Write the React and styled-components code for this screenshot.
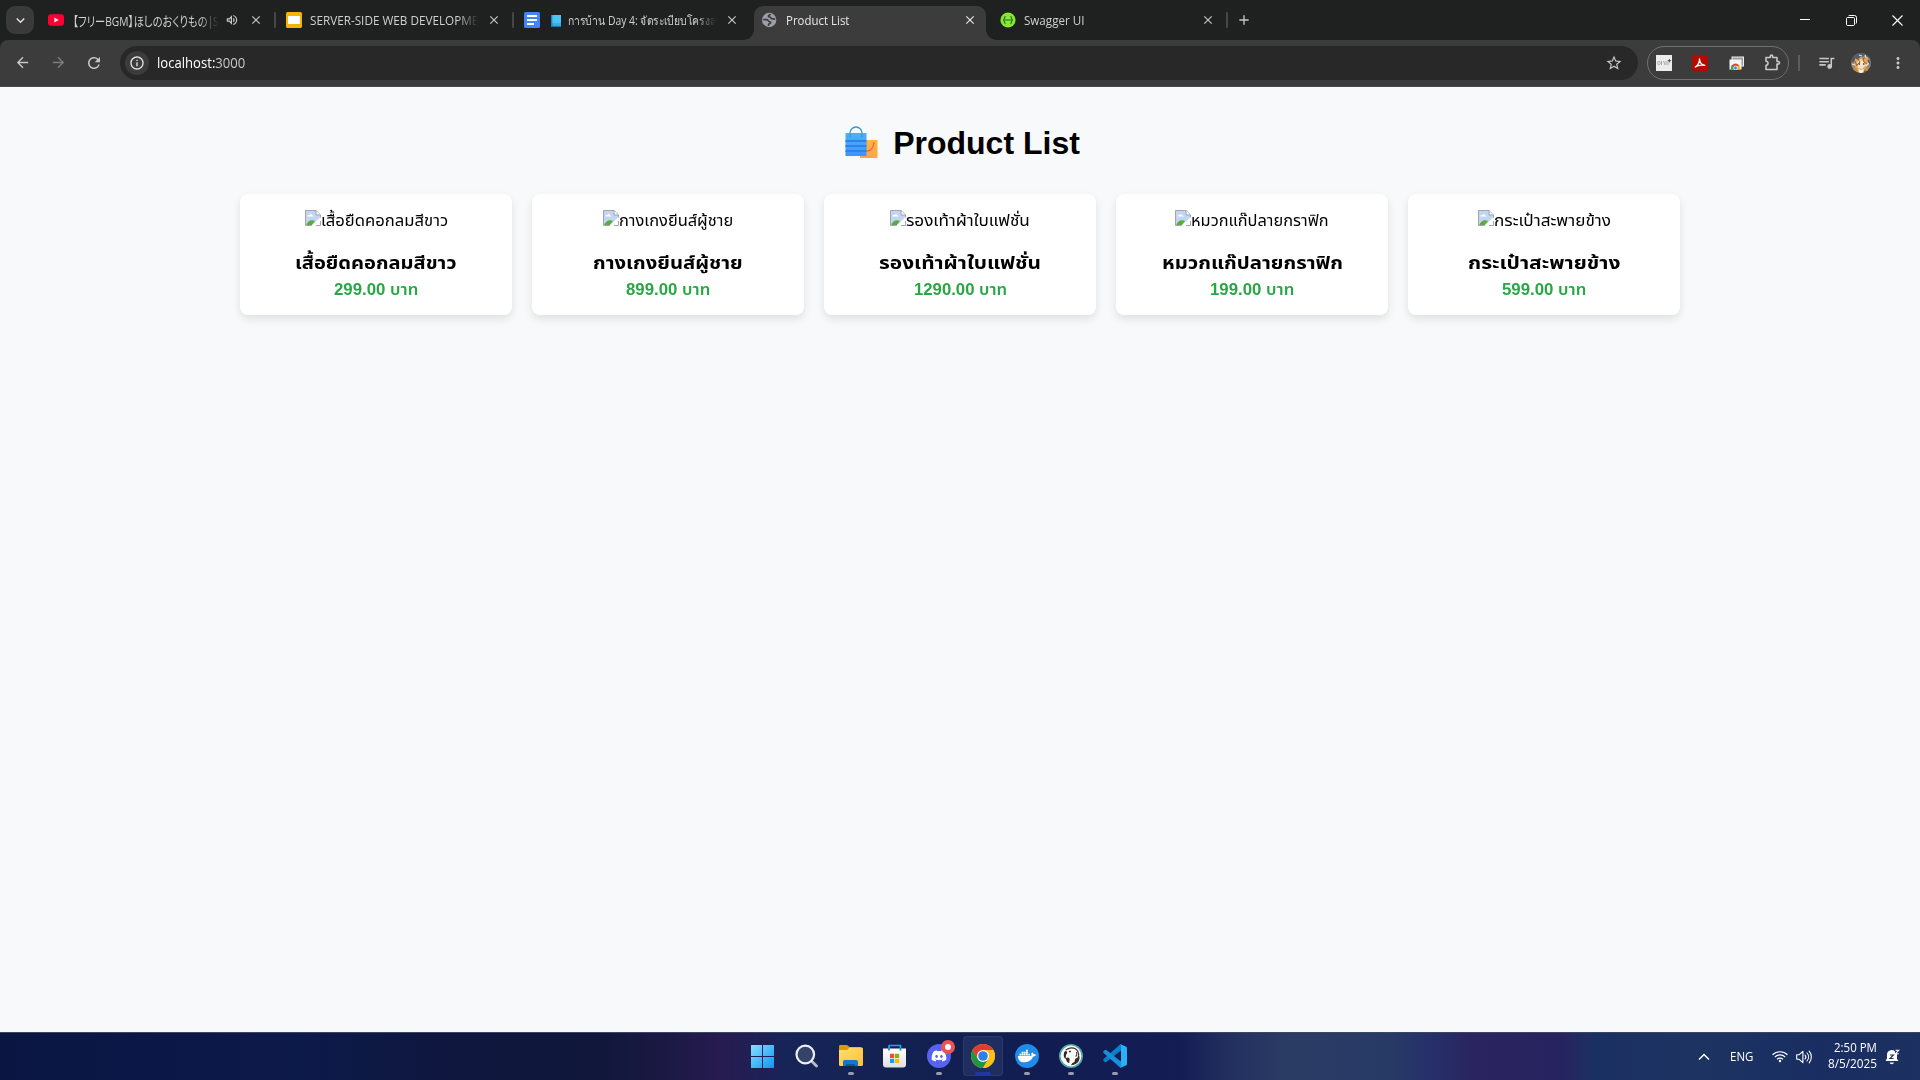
import React, { useLayoutEffect, useRef, useState } from 'react';
import styled, { createGlobalStyle } from 'styled-components';
import {
  MdArrowBack,
  MdArrowForward,
  MdRefresh,
  MdInfoOutline,
  MdStarBorder,
  MdMoreVert,
  MdClose,
  MdOutlineVolumeUp,
  MdQueueMusic,
  MdAdd,
  MdKeyboardArrowDown,
} from 'react-icons/md';
import { FaDiscord, FaDocker } from 'react-icons/fa';

const GlobalStyle = createGlobalStyle`
  * { box-sizing: border-box; }
  body { margin: 0; background: #f8f9fb; overflow: hidden; }
  h1, h3, p { margin: 0; }
  svg { display: block; flex: none; }
`;

const uiFont = '"Open Sans", "Noto Sans", "Noto Sans CJK JP", sans-serif';
const pageFont = '"Liberation Sans", "Noto Sans Thai", sans-serif';

/* ---------- text that keeps a fixed advance width ---------- */

const FitBox = styled.span`
  display: inline-block;
  width: ${(p) => p.$width}px;
  flex: none;
  text-align: left;
  white-space: pre;
`;

const FitInner = styled.span`
  display: inline-block;
  transform-origin: 0 50%;
`;

function Fit({ width, children }) {
  const ref = useRef(null);
  const [scale, setScale] = useState(1);
  useLayoutEffect(() => {
    setScale(width / ref.current.offsetWidth);
  }, [width]);
  return (
    <FitBox $width={width}>
      <FitInner ref={ref} style={{ transform: `scaleX(${scale})` }}>{children}</FitInner>
    </FitBox>
  );
}

/* ---------- browser window ---------- */

const Screen = styled.div`
  width: 1920px;
  height: 1080px;
  display: flex;
  flex-direction: column;
  overflow: hidden;
`;

const TabStrip = styled.div`
  height: 40px;
  flex: none;
  display: flex;
  background: #1f2120;
  font: 12px/16px ${uiFont};
  color: #c7c7c7;
`;

const TabSearch = styled.div`
  width: 28px;
  height: 28px;
  margin: 6px 3px 0 6px;
  border-radius: 9px;
  background: #3a3a3a;
  color: #e3e3e3;
  display: grid;
  place-items: center;
`;

const Tab = styled.div`
  position: relative;
  width: 238px;
  height: 40px;
  padding: 0 12px 0 11px;
  display: flex;
  align-items: center;
  color: ${(p) => (p.$active ? '#e8e8e8' : '#d0d0d0')};
  > * { z-index: 1; }
`;

const ActiveShape = styled.div`
  position: absolute;
  inset: 6px 3px 0 3px;
  z-index: 0;
  border-radius: 9px 9px 0 0;
  background: #3c3c3c;
  &::before, &::after {
    content: '';
    position: absolute;
    bottom: 0;
    width: 10px;
    height: 10px;
  }
  &::before { left: -10px; background: radial-gradient(circle at 0 0, transparent 9.5px, #3c3c3c 10px); }
  &::after { right: -10px; background: radial-gradient(circle at 100% 0, transparent 9.5px, #3c3c3c 10px); }
`;

const Favicon = styled.div`
  width: 16px;
  height: 16px;
  margin-right: ${(p) => p.$gap || 8}px;
  flex: none;
`;

const TabTitle = styled.div`
  flex: 1;
  min-width: 0;
  height: 20px;
  display: flex;
  align-items: center;
  overflow: hidden;
  white-space: pre;
  padding-top: 1px;
  font-size: ${(p) => p.$size || 12}px;
  font-feature-settings: ${(p) => (p.$tight ? '"palt"' : 'normal')};
  -webkit-mask-image: ${(p) => (p.$fade ? 'linear-gradient(to right, #000 calc(100% - 20px), transparent)' : 'none')};
  mask-image: ${(p) => (p.$fade ? 'linear-gradient(to right, #000 calc(100% - 20px), transparent)' : 'none')};
`;

const TabAction = styled.div`
  margin-left: ${(p) => p.$gap}px;
  color: ${(p) => (p.$active ? '#e8e8e8' : '#c7c7c7')};
`;

const TabDivider = styled.div`
  width: 2px;
  height: 16px;
  position: absolute;
  right: -1px;
  top: 12px;
  border-radius: 1px;
  background: #454746;
`;

const NewTab = styled.div`
  width: 34px;
  display: grid;
  place-items: center;
  color: #c7c7c7;
`;

const WindowButtons = styled.div`
  margin-left: auto;
  display: flex;
`;

const WindowButton = styled.div`
  width: 46px;
  height: 40px;
  display: grid;
  place-items: center;
`;

const ToolbarBack = styled.div`
  background: #1f2120;
  flex: none;
`;

const Toolbar = styled.div`
  height: 47px;
  padding: 0 10px 1px 9px;
  display: flex;
  align-items: center;
  background: #3c3c3c;
  border-bottom: 1px solid #4a4a4a;
  border-radius: 8px 8px 0 0;
`;

const NavButton = styled.div`
  width: 26px;
  margin-right: 10px;
  display: grid;
  place-items: center;
  color: ${(p) => (p.$dim ? '#7d7d7d' : '#c7c7c7')};
`;

const Omnibox = styled.div`
  width: 1518px;
  height: 34px;
  margin-left: 3px;
  padding: 0 15px 0 5px;
  border-radius: 17px;
  background: #282828;
  display: flex;
  align-items: center;
  font: 14px/20px ${uiFont};
  color: #c7c7c7;
`;

const SiteInfo = styled.div`
  width: 24px;
  height: 24px;
  margin-right: 8px;
  border-radius: 50%;
  background: #3c3c3c;
  color: #e3e3e3;
  display: grid;
  place-items: center;
`;

const Host = styled.span`
  color: #ffffff;
`;

const StarSlot = styled.div`
  margin-left: auto;
`;

const Extensions = styled.div`
  width: 142px;
  height: 34px;
  margin-left: 9px;
  border: 1px solid #707070;
  border-radius: 17px;
  display: flex;
  align-items: center;
  justify-content: space-between;
  padding: 0 7px 0 8px;
  color: #c7c7c7;
`;

const BarDivider = styled.div`
  width: 2px;
  height: 16px;
  margin: 0 17px 0 9px;
  background: #5c5c5c;
`;

const ToolSlot = styled.div`
  color: #c7c7c7;
  margin-right: ${(p) => p.$gap}px;
`;

/* ---------- product page ---------- */

const Page = styled.main`
  flex: 1;
  background: #f8f9fb;
  font-family: ${pageFont};
  color: #000;
  padding-top: 38px;
`;

const Heading = styled.h1`
  display: flex;
  justify-content: center;
  gap: 10px;
  font-size: 32px;
  line-height: 36px;
  font-weight: 700;
`;

const Grid = styled.div`
  width: 1440px;
  margin: 33px auto 0;
  display: grid;
  grid-template-columns: repeat(5, 1fr);
  gap: 20px;
`;

const Card = styled.article`
  height: 121px;
  padding: 16px;
  display: flex;
  flex-direction: column;
  align-items: center;
  background: #fff;
  border-radius: 8px;
  box-shadow: 0 4px 8px rgba(0, 0, 0, 0.1);
`;

const MissingImage = styled.div`
  height: 20px;
  display: flex;
  font-size: 16px;
  line-height: 22px;
`;

const ProductName = styled.h3`
  height: 22px;
  margin: 22px 0 6px;
  font-size: 18px;
  line-height: 22px;
  font-weight: 700;
`;

const Price = styled.p`
  height: 20px;
  font-size: 16px;
  line-height: 20px;
  font-weight: 700;
  color: #28a745;
`;

const Currency = styled.span`
  font-weight: 600;
`;

/* ---------- taskbar ---------- */

const Taskbar = styled.footer`
  height: 48px;
  flex: none;
  display: grid;
  grid-template-columns: 741px 396px 1fr;
  border-top: 1px solid #3d4663;
  background: linear-gradient(to right,
    #0a1542 0, #0c1a4a 300px, #0e1740 420px, #10173a 600px, #1c1945 670px, #271b50 720px,
    #172458 790px, #122150 900px, #111d52 1060px, #141d54 1180px, #22305f 1230px, #2b3c64 1290px,
    #273a66 1390px, #26306a 1430px, #2a2560 1470px, #272360 1560px, #1b3062 1595px, #1d3462 1700px,
    #192d62 1820px, #1c3160 1920px);
`;

const Apps = styled.div`
  grid-column: 2;
  display: flex;
`;

const AppSlot = styled.div`
  position: relative;
  width: 40px;
  height: 40px;
  margin: 3px 2px 0;
  border-radius: 4px;
  display: grid;
  place-items: center;
  background: ${(p) => (p.$focused ? 'rgba(150, 160, 210, 0.11)' : 'transparent')};
  box-shadow: ${(p) => (p.$focused ? 'inset 0 0 0 1px rgba(160, 175, 230, 0.1)' : 'none')};
`;

const Running = styled.div`
  position: absolute;
  bottom: 1px;
  left: 50%;
  width: ${(p) => (p.$focused ? 16 : 6)}px;
  height: 3px;
  margin-left: ${(p) => (p.$focused ? -8 : -3)}px;
  border-radius: 2px;
  background: ${(p) => (p.$focused ? '#2037a3' : '#989cac')};
`;

const Badge = styled.div`
  position: absolute;
  top: 4px;
  right: 4px;
  width: 14px;
  height: 14px;
  border-radius: 50%;
  border: 4px solid #ee5253;
  background: #fff;
`;

const Tray = styled.div`
  grid-column: 3;
  display: flex;
  align-items: center;
  justify-content: flex-end;
  padding-right: 20px;
  color: #fff;
  font: 12px/16px ${uiFont};
`;

const TraySlot = styled.div`
  margin-right: ${(p) => p.$gap}px;
`;

const Clock = styled.div`
  display: flex;
  flex-direction: column;
  align-items: flex-end;
  margin: -2px 8px 0 0;
`;

/* ---------- icons ---------- */

const YouTubeIcon = () => (
  <svg width="16" height="16" viewBox="0 0 16 16">
    <rect x="0" y="2.3" width="16" height="11.4" rx="3" fill="#ff0033" />
    <path d="M6.4 5.6 10.6 8 6.4 10.4z" fill="#fff" />
  </svg>
);

const SlidesIcon = () => (
  <svg width="16" height="16" viewBox="0 0 16 16">
    <rect width="16" height="16" rx="1.6" fill="#f5b400" />
    <rect x="2" y="4" width="12" height="8" fill="#fff" />
  </svg>
);

const DocsIcon = () => (
  <svg width="16" height="16" viewBox="0 0 16 16">
    <rect width="16" height="16" rx="1.6" fill="#4285f4" />
    <path d="M3 4h10M3 8h10M3 12h7" stroke="#fff" strokeWidth="2" />
  </svg>
);

const BookIcon = () => (
  <svg width="17" height="14" viewBox="0 0 17 14">
    <path d="M0 1h10v11.5H0z" fill="#35b1ea" />
    <path d="M0 1h1.5v11.5H0z" fill="#1d86c8" />
    <path d="M1.500 1H10v8H1.500z" fill="#4dc2f4" />
    <path d="M1 12.5h9" stroke="#1a73b8" strokeWidth="1.2" />
  </svg>
);

const GlobeIcon = () => (
  <svg width="16" height="16" viewBox="0 0 16 16">
    <circle cx="7.200" cy="8" r="7.200" fill="#9aa0a6" />
    <path d="M1.200 7.600h3.600c1.600 0 1.200 1.900 2.800 2.100 1.600.2 1.200 1.500 0 1.900-1.200.5-1.200 1.300-1.200 2.300" fill="none" stroke="#3c3c3c" strokeWidth="1.600" />
    <path d="M8.600 2c-.2 1-1.900.8-2.200 1.700-.3 1 .9 1.200 1.700 1.300 1 .2.600 1.600 1.700 1.800 1.200.2 2.300 0 3.400.4" fill="none" stroke="#3c3c3c" strokeWidth="1.600" />
  </svg>
);

const SwaggerIcon = () => (
  <svg width="16" height="16" viewBox="0 0 16 16">
    <circle cx="8" cy="8" r="7.6" fill="#85ea2d" />
    <path d="M5.6 4.2c-1.5 0-.6 2.9-2 3.8 1.4.9.5 3.8 2 3.8M10.4 4.2c1.5 0 .6 2.9 2 3.8-1.4.9-.5 3.8-2 3.8" fill="none" stroke="#2d5a3a" strokeWidth="1.1" />
    <path d="M5 8h6" stroke="#3f7a35" strokeWidth="1.300" />
  </svg>
);

const MinimizeIcon = () => (
  <svg width="10" height="10" viewBox="0 0 10 10"><path d="M0 4.5h10" stroke="#fff" /></svg>
);

const RestoreIcon = () => (
  <svg width="11" height="11" viewBox="0 0 11 11" fill="none" stroke="#fff">
    <rect x=".5" y="2.5" width="8" height="8" rx="1.2" />
    <path d="M2.5.8Q3 .5 4 .5h4.5q2 0 2 2V7q0 1-.4 1.5" />
  </svg>
);

const CloseIcon = () => (
  <svg width="11" height="11" viewBox="0 0 11 11"><path d="m.5.5 10 10m0-10-10 10" stroke="#fff" strokeWidth="1.1" /></svg>
);

const NoteExtIcon = () => (
  <svg width="16" height="16" viewBox="0 0 16 16">
    <rect width="16" height="16" fill="#ececec" />
    <path d="M2.500 6 1.500 8l1 2m.8-4 1.200 2-1.200 2M5.500 6v4M7.500 6l1.500 4M10 6v4M12 6.500v3.500" fill="none" stroke="#9a9a9a" strokeWidth=".8" />
    <path d="M13.400 4v3.400M11.700 5.700h3.400" stroke="#444" strokeWidth=".9" />
  </svg>
);

const AcrobatIcon = () => (
  <svg width="16" height="16" viewBox="0 0 16 16">
    <rect width="16" height="16" rx="2" fill="#b30b00" />
    <path d="M3.300 12C5.300 10.800 7.500 7.500 7.500 4M7.500 4c.2 3 2.200 5.800 5.300 6.300M3.300 12c2-1.500 6-2.300 9.500-1.700" fill="none" stroke="#fff" strokeWidth="1.300" strokeLinecap="round" />
  </svg>
);

const StoreExtIcon = () => (
  <svg width="15" height="14" viewBox="0 0 15 14">
    <rect x="3" y="1" width="11.500" height="9" fill="#9d9d9d" stroke="#eee" />
    <rect x=".5" y="3.500" width="12" height="10" fill="#f4f4f4" />
    <path d="M2 13.500a4.500 4.500 0 0 1 .9-4.400L6.500 11v2.500z" fill="#34a853" />
    <path d="M2.500 9.800a4.700 4.700 0 0 1 8 0L6.500 11.500z" fill="#ea4335" />
    <path d="M7 13.500h4a4.500 4.500 0 0 0-.6-3.900L6.500 10.500z" fill="#fbbc04" />
    <circle cx="6.500" cy="12" r="1.900" fill="#4285f4" stroke="#fff" strokeWidth=".7" />
  </svg>
);

const PuzzleIcon = () => (
  <svg width="17" height="17" viewBox="0 0 17 17">
    <path d="M2 3.500h4.300V2.300a1.200 1.200 0 0 1 2.400 0v1.200H13v4h1.200a1.200 1.200 0 0 1 0 2.600H13v5.400H2v-4.200a2 2 0 0 0 0-4z" fill="none" stroke="#c7c7c7" strokeWidth="1.600" strokeLinejoin="round" />
  </svg>
);

const AvatarIcon = () => (
  <svg width="20" height="20" viewBox="0 0 20 20">
    <defs><clipPath id="avatar"><circle cx="10" cy="10" r="10" /></clipPath></defs>
    <g clipPath="url(#avatar)">
      <rect width="20" height="20" fill="#8b8782" />
      <path d="M0 0h20v5l-6-2-5 1-4 4-5 2z" fill="#555b68" />
      <path d="m4 5 3 2 3-3 4 2 3-2v7l-3 6H6l-3-5z" fill="#e3a752" />
      <path d="m6 9 4-3 3 3 2 3-4 4-4-1z" fill="#f3e0c6" />
      <path d="m7 6 2 3-3 3M12 5l1 4 3 2M4 8l2 5" fill="none" stroke="#a2602a" strokeWidth="1" />
      <path d="M7.500 11H9M12 11h1.500" stroke="#39405e" strokeWidth="1.500" />
      <path d="m2 14 4 2 3 4H3zM12 17l5-3v6h-6z" fill="#d38d36" />
      <path d="m7 16 3 1 3-1-1 4H8z" fill="#f4f1ec" />
      <path d="M1 11l3 1M15 13l3-3M8 2l3 1M14 2l1 3" stroke="#e9e4dc" strokeWidth="1.300" />
      <path d="M17 7l2 4M2 7l2-2M13 18l3 1" stroke="#454c5e" strokeWidth="1.200" />
    </g>
  </svg>
);

const BagsIcon = () => (
  <svg width="43" height="36" viewBox="0 0 43 36">
    <defs>
      <linearGradient id="bag" x2="0" y2="1"><stop stopColor="#48b4f8" /><stop offset="1" stopColor="#3f94fb" /></linearGradient>
      <linearGradient id="smallBag" x2="0" y2="1"><stop stopColor="#ffb53f" /><stop offset="1" stopColor="#fba54c" /></linearGradient>
    </defs>
    <path d="M20 15h17.500v18H20z" fill="url(#smallBag)" />
    <path d="M33.800 17c.2 5.500-3 9.500-8 9" fill="none" stroke="#ef6a3a" strokeWidth="1.300" />
    <path d="M5.500 8h21v23h-21z" fill="url(#bag)" />
    <path d="M5.500 16h21M5.500 21h21M5.500 26h21" stroke="#2f82ea" strokeWidth="1.800" />
    <path d="M10 12V8a6 6 0 0 1 12 0v4" fill="none" stroke="#3c94dc" strokeWidth="1.300" />
  </svg>
);

const BrokenIcon = () => (
  <svg width="16" height="16" viewBox="0 0 16 16">
    <path d="M.5.5h10.600l4.400 4.400v10.600H.5z" fill="#c3d5f5" />
    <path d="M1 15.500c1.500-4.500 5-6.500 9-4.500l-3.500 4.500z" fill="#5aac3b" />
    <path d="M2.500 6.500c0-1.500 1.500-1.700 1.900-1.200.4-1.600 2.700-1.500 2.900.1 1 0 1.300.6 1.200 1.100z" fill="#fff" />
    <path d="M16 8.500 8 16h8z" fill="#fff" />
    <path d="M15.500 8V4.900L11.100.5H.5v15h6" fill="none" stroke="#a3a6a9" />
    <path d="M11 .5V5h4.500" fill="#f4f6fa" stroke="#a3a6a9" />
    <path d="M15.500 11v4.500H11" fill="none" stroke="#a3a6a9" />
    <path d="M16 8 7.500 16" stroke="#fff" strokeWidth="1.800" />
  </svg>
);

const StartIcon = () => (
  <svg width="24" height="24" viewBox="0 0 24 24">
    <defs><linearGradient id="start" x2="1" y2="1"><stop stopColor="#85e0fd" /><stop offset="1" stopColor="#0f95f5" /></linearGradient></defs>
    <path d="M0 1.500Q0 1 .5 1H11v11H0zM12 1h10.500q.5 0 .5.500V12H12zM0 13h11v11H.5q-.5 0-.5-.5zM12 13h11v10.500q0 .5-.5.500H12z" fill="url(#start)" />
  </svg>
);

const SearchIcon = () => (
  <svg width="24" height="24" viewBox="0 0 24 24">
    <path d="m16 16.500 5.500 5.500" stroke="#b9bcc7" strokeWidth="2.800" strokeLinecap="round" />
    <circle cx="10.300" cy="10.500" r="8.800" fill="#37426b" stroke="#eceef3" strokeWidth="2.200" />
  </svg>
);

const FolderIcon = () => (
  <svg width="24" height="24" viewBox="0 0 24 24">
    <defs><linearGradient id="folder" x2="1" y2="1"><stop stopColor="#ffdf75" /><stop offset="1" stopColor="#fcc02c" /></linearGradient></defs>
    <path d="M0 2.300Q0 1 1.300 1h6.200q1 0 1.600.8L10.500 3H22v5H0z" fill="#d99a09" />
    <path d="M0 6h8.200l2.300-2.500h12.200q1.300 0 1.300 1.300v16q0 1.300-1.300 1.300H1.300Q0 22 0 20.800z" fill="url(#folder)" />
    <path d="M4 22v-4.200Q4 16 5.800 16h11.400q1.800 0 1.800 1.800V22z" fill="#1577c9" />
    <path d="M7 20h9v2H7z" fill="#0b5a9d" />
  </svg>
);

const StoreIcon = () => (
  <svg width="24" height="24" viewBox="0 0 24 24">
    <defs><linearGradient id="store" x2="0" y2="1"><stop stopColor="#fff" /><stop offset="1" stopColor="#dfe0e3" /></linearGradient></defs>
    <path d="M6 7V1.500h11.500V7" fill="none" stroke="#1ba5ed" strokeWidth="1.700" strokeLinejoin="round" />
    <path d="M0 4.500h23V20.500q0 3-3 3H3q-3 0-3-3z" fill="url(#store)" />
    <path d="M6 6.500V4M17.500 6.500V4" stroke="#1687d0" strokeWidth="1.700" />
    <path d="M7 9.800h4.200V14H7z" fill="#f25022" />
    <path d="M12 9.800h4.200V14H12z" fill="#7fba00" />
    <path d="M7 14.800h4.200V19H7z" fill="#00a4ef" />
    <path d="M12 14.800h4.200V19H12z" fill="#ffb900" />
  </svg>
);

const RoundIcon = styled.div`
  width: 24px;
  height: 24px;
  border-radius: 50%;
  background: ${(p) => p.$color};
  color: #fff;
  display: grid;
  place-items: center;
`;

const ChromeIcon = () => (
  <svg width="24" height="24" viewBox="0 0 24 24">
    <circle cx="12" cy="12" r="12" fill="#fbc116" />
    <path d="M1.610 6A12 12 0 0 1 22.390 6H12L6.800 15z" fill="#e33b2e" />
    <path d="M1.610 6A12 12 0 0 0 12 24l5.200-9L12 12 6.800 15z" fill="#229342" />
    <path d="M22.390 6A12 12 0 0 1 12 24l5.200-9L12 6z" fill="#fbc116" />
    <circle cx="12" cy="12" r="6" fill="#fff" />
    <circle cx="12" cy="12" r="4.800" fill="#2f7de9" />
  </svg>
);

const BeaverIcon = () => (
  <svg width="24" height="24" viewBox="0 0 24 24">
    <circle cx="12" cy="12" r="11.200" fill="#fbfaf8" stroke="#4aa9a8" strokeWidth="1.600" />
    <path d="M6.800 6.200C8.500 4 13 3.200 16 4.500c2.500 1.400 3.500 4 3.700 6.500" fill="none" stroke="#3a2d28" strokeWidth="1.200" />
    <path d="M5 9.500c0-1.700.9-2.700 2.300-2.500l1 1.700-1.300 2.100-.4 4.200C5 14 4.300 11.500 5 9.500z" fill="#2e2421" />
    <path d="M10 7.500h1.800" stroke="#2e2421" strokeWidth="1.400" />
    <path d="m6.500 14 2.700-.5 1.500 1.200-.5 4.500-2.300-1.400z" fill="#3a2d28" />
    <path d="M19.500 10c1.700 3 1.300 6-.6 8.300-1.800 1.900-4.500 3-7 3l1.500-2.300 2.100-1 .6-3 2.500-1.500z" fill="#3a2d28" />
    <path d="M17.200 8c.9 1.300.7 3.500-.6 4.500" fill="none" stroke="#3a2d28" strokeWidth="1.100" />
  </svg>
);

const CodeIcon = () => (
  <svg width="24" height="24" viewBox="0 0 24 24">
    <path d="M17.300.2 23 2.800q1 .5 1 1.500V8L17.500 6.800 3 18.200 1.800 18 .3 16.500q-.5-.7.1-1.300z" fill="#0a7fc9" />
    <path d="M17.300 23.800 23 21.200q1-.5 1-1.500V16l-6.500 1.200L3 5.800 1.800 6 .3 7.500q-.5.7.1 1.300z" fill="#1490dd" />
    <path d="M17.300.2Q18 1 18 2.500v19q0 1.500-.7 2.300l5.700-2.600q1-.5 1-1.500V4.300q0-1-1-1.500z" fill="#2bb0f3" />
  </svg>
);

const ChevronUpIcon = () => (
  <svg width="12" height="8" viewBox="0 0 12 8"><path d="m1 6.500 5-5 5 5" fill="none" stroke="#fff" strokeWidth="1.500" /></svg>
);

const WifiIcon = () => (
  <svg width="16" height="13" viewBox="0 0 16 13" fill="none" stroke="#fff" strokeWidth="1.200">
    <path d="M.6 4.800a10.500 10.500 0 0 1 14.800 0M2.800 7.100a7.400 7.400 0 0 1 10.400 0M5 9.300a4.200 4.200 0 0 1 6 0" />
    <circle cx="8" cy="11" r="1.200" fill="#fff" stroke="none" />
  </svg>
);

const SpeakerIcon = () => (
  <svg width="17" height="14" viewBox="0 0 17 14" fill="none" stroke="#fff" strokeWidth="1.100" strokeLinejoin="round" strokeLinecap="round">
    <path d="M.7 4.700h2.500L6.900 1.300v11.400L3.200 9.300H.7z" />
    <path d="M9 5a3 3 0 0 1 0 4M11 3a6 6 0 0 1 0 8M13.200 1.200a9 9 0 0 1 0 11.600" />
  </svg>
);

const BellIcon = () => (
  <svg width="15" height="16" viewBox="0 0 15 16">
    <path d="M2 6a4.700 4.700 0 0 1 8-3.500V5h2v5l1.500 2H.5L2 9.500z" fill="#fff" />
    <path d="M4.500 13.500h4.500q-.5 1.700-2.200 1.700t-2.300-1.700z" fill="#fff" />
    <path d="M10.500 1.200h3.300l-3.300 3.500h3.300" fill="none" stroke="#fff" strokeWidth="1.100" />
    <path d="M5 6h3.500L5 9.500h3.500" fill="none" stroke="#1b3062" strokeWidth="1.100" />
  </svg>
);

/* ---------- content ---------- */

const products = [
  { name: 'เสื้อยืดคอกลมสีขาว', price: '299.00', alt: 127, title: 162, cost: 84 },
  { name: 'กางเกงยีนส์ผู้ชาย', price: '899.00', alt: 114, title: 150, cost: 84 },
  { name: 'รองเท้าผ้าใบแฟชั่น', price: '1290.00', alt: 124, title: 162, cost: 93 },
  { name: 'หมวกแก๊ปลายกราฟิก', price: '199.00', alt: 138, title: 181, cost: 84 },
  { name: 'กระเป๋าสะพายข้าง', price: '599.00', alt: 117, title: 152, cost: 84 },
];

const apps = [
  { id: 'start', icon: <StartIcon /> },
  { id: 'search', icon: <SearchIcon /> },
  { id: 'files', icon: <FolderIcon />, running: true },
  { id: 'store', icon: <StoreIcon /> },
  { id: 'discord', icon: <RoundIcon $color="#5662f0"><FaDiscord size={16} /></RoundIcon>, running: true, badge: true },
  { id: 'chrome', icon: <ChromeIcon />, running: true, focused: true },
  { id: 'docker', icon: <RoundIcon $color="#1d8ceb"><FaDocker size={18} /></RoundIcon>, running: true },
  { id: 'beaver', icon: <BeaverIcon />, running: true },
  { id: 'code', icon: <CodeIcon />, running: true },
];

const TabClose = ({ active, gap = 9 }) => (
  <TabAction $active={active} $gap={gap}><MdClose size={14} /></TabAction>
);

export default function App() {
  return (
    <Screen>
      <GlobalStyle />
      <TabStrip>
        <TabSearch><MdKeyboardArrowDown size={17} /></TabSearch>
        <Tab>
          <Favicon $gap={9}><YouTubeIcon /></Favicon>
          <TabTitle $fade $tight $size={13}><Fit width={146}>【フリーBGM】ほしのおくりもの|S</Fit></TabTitle>
          <TabAction $gap={6}><MdOutlineVolumeUp size={14} /></TabAction>
          <TabClose gap={10} />
          <TabDivider />
        </Tab>
        <Tab>
          <Favicon><SlidesIcon /></Favicon>
          <TabTitle $fade><Fit width={168}>SERVER-SIDE WEB DEVELOPME</Fit></TabTitle>
          <TabClose />
          <TabDivider />
        </Tab>
        <Tab>
          <Favicon $gap={11}><DocsIcon /></Favicon>
          <TabTitle $fade><BookIcon /><Fit width={148}>การบ้าน Day 4: จัดระเบียบโครงส</Fit></TabTitle>
          <TabClose />
        </Tab>
        <Tab $active>
          <ActiveShape />
          <Favicon><GlobeIcon /></Favicon>
          <TabTitle><Fit width={63}>Product List</Fit></TabTitle>
          <TabClose active />
        </Tab>
        <Tab>
          <Favicon><SwaggerIcon /></Favicon>
          <TabTitle><Fit width={60}>Swagger UI</Fit></TabTitle>
          <TabClose />
          <TabDivider />
        </Tab>
        <NewTab><MdAdd size={16} /></NewTab>
        <WindowButtons>
          <WindowButton><MinimizeIcon /></WindowButton>
          <WindowButton><RestoreIcon /></WindowButton>
          <WindowButton><CloseIcon /></WindowButton>
        </WindowButtons>
      </TabStrip>
      <ToolbarBack>
        <Toolbar>
          <NavButton><MdArrowBack size={17} /></NavButton>
          <NavButton $dim><MdArrowForward size={17} /></NavButton>
          <NavButton><MdRefresh size={18} /></NavButton>
          <Omnibox>
            <SiteInfo><MdInfoOutline size={16} /></SiteInfo>
            <Fit width={88}><Host>localhost:</Host>3000</Fit>
            <StarSlot><MdStarBorder size={18} /></StarSlot>
          </Omnibox>
          <Extensions>
            <NoteExtIcon />
            <AcrobatIcon />
            <StoreExtIcon />
            <PuzzleIcon />
          </Extensions>
          <BarDivider />
          <ToolSlot $gap={15}><MdQueueMusic size={19} /></ToolSlot>
          <ToolSlot $gap={18}><AvatarIcon /></ToolSlot>
          <ToolSlot $gap={0}><MdMoreVert size={18} /></ToolSlot>
        </Toolbar>
      </ToolbarBack>
      <Page>
        <Heading><BagsIcon />Product List</Heading>
        <Grid>
          {products.map((p) => (
            <Card key={p.name}>
              <MissingImage><BrokenIcon /><Fit width={p.alt}>{p.name}</Fit></MissingImage>
              <ProductName><Fit width={p.title}>{p.name}</Fit></ProductName>
              <Price><Fit width={p.cost}>{p.price} <Currency>บาท</Currency></Fit></Price>
            </Card>
          ))}
        </Grid>
      </Page>
      <Taskbar>
        <Apps>
          {apps.map((a) => (
            <AppSlot key={a.id} $focused={a.focused}>
              {a.icon}
              {a.badge && <Badge />}
              {a.running && <Running $focused={a.focused} />}
            </AppSlot>
          ))}
        </Apps>
        <Tray>
          <TraySlot $gap={20}><ChevronUpIcon /></TraySlot>
          <TraySlot $gap={19}><Fit width={23}>ENG</Fit></TraySlot>
          <TraySlot $gap={8}><WifiIcon /></TraySlot>
          <TraySlot $gap={15}><SpeakerIcon /></TraySlot>
          <Clock>
            <Fit width={43}>2:50 PM</Fit>
            <Fit width={49}>8/5/2025</Fit>
          </Clock>
          <BellIcon />
        </Tray>
      </Taskbar>
    </Screen>
  );
}
